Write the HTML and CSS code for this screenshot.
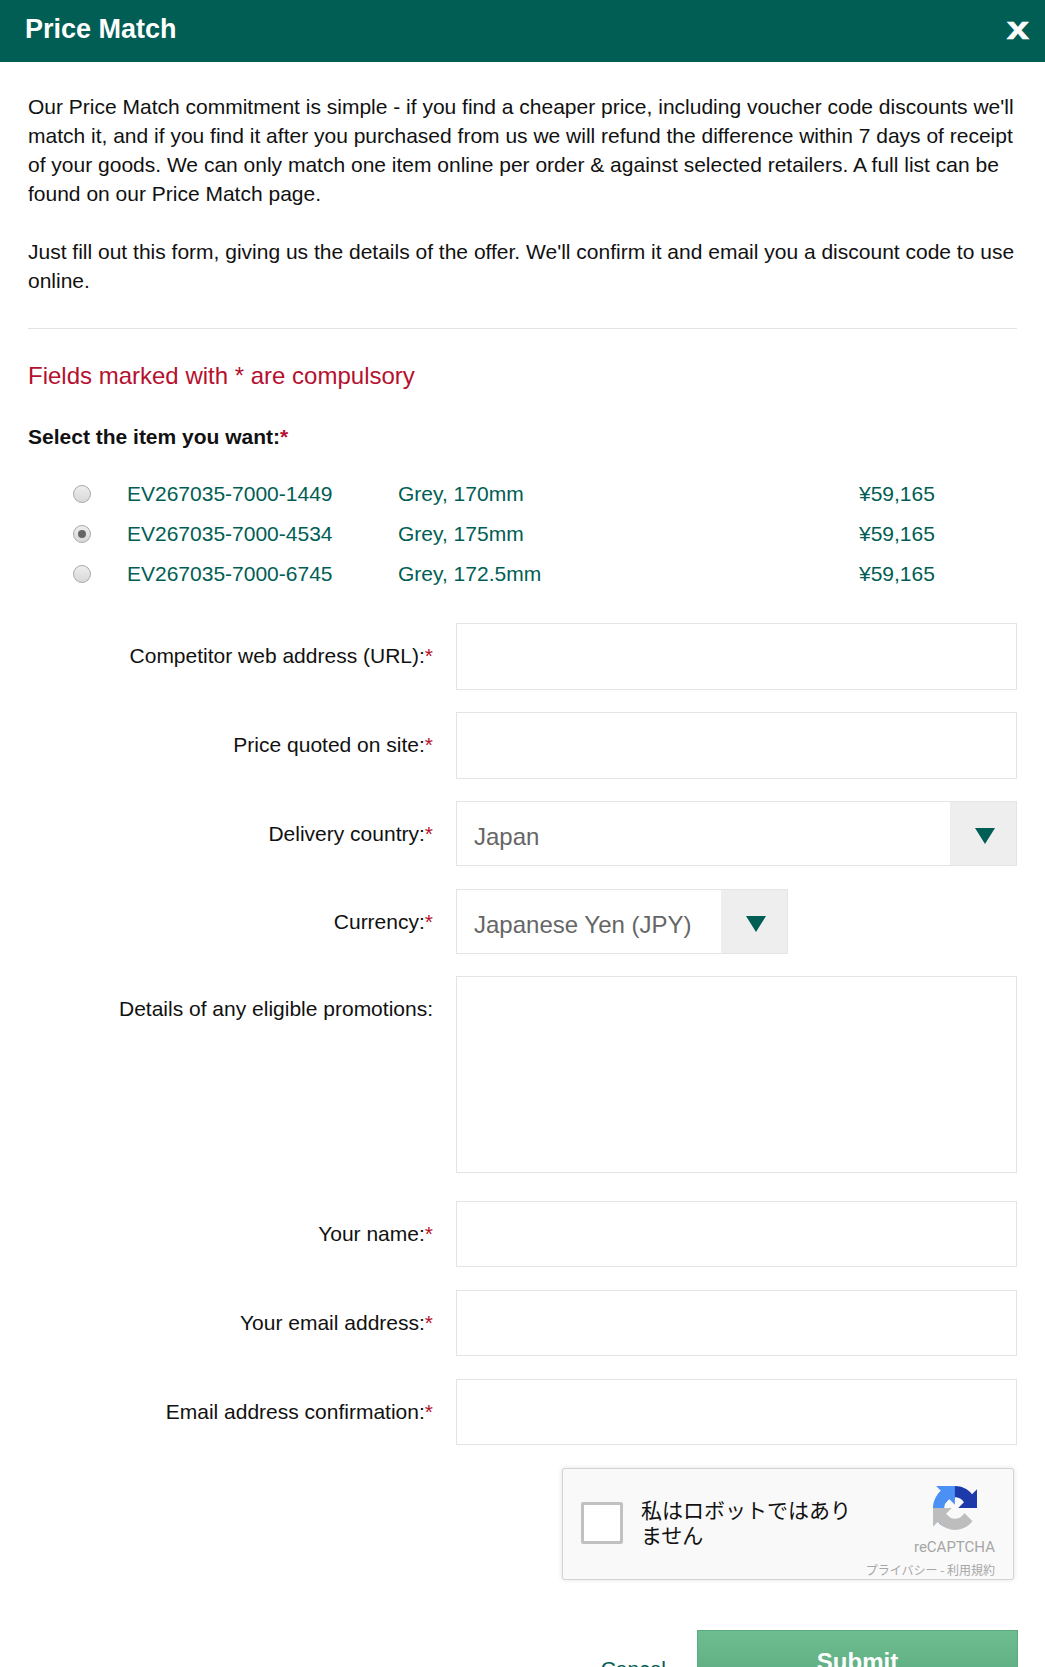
FILE: index.html
```html
<!DOCTYPE html>
<html lang="en">
<head>
<meta charset="utf-8">
<title>Price Match</title>
<link rel="stylesheet" href="styles.css">
</head>
<body>
<div class="page">
  <header class="modal-header">
    <h1 class="modal-title">Price Match</h1>
    <span class="modal-close">x</span>
  </header>
  <main class="modal-body">
    <p class="intro">Our Price Match commitment is simple - if you find a cheaper price, including voucher code discounts we'll match it, and if you find it after you purchased from us we will refund the difference within 7 days of receipt of your goods. We can only match one item online per order &amp; against selected retailers. A full list can be found on our Price Match page.</p>
    <p class="intro">Just fill out this form, giving us the details of the offer. We'll confirm it and email you a discount code to use online.</p>
    <hr class="divider">
    <p class="compulsory">Fields marked with * are compulsory</p>
    <p class="select-title">Select the item you want:<span class="req">*</span></p>
    <div class="items">
      <div class="item"><span class="radio"></span><span class="sku">EV267035-7000-1449</span><span class="variant">Grey, 170mm</span><span class="price">¥59,165</span></div>
      <div class="item"><span class="radio radio-on"></span><span class="sku">EV267035-7000-4534</span><span class="variant">Grey, 175mm</span><span class="price">¥59,165</span></div>
      <div class="item"><span class="radio"></span><span class="sku">EV267035-7000-6745</span><span class="variant">Grey, 172.5mm</span><span class="price">¥59,165</span></div>
    </div>
    <div class="form">
      <div class="row row-input"><label class="label">Competitor web address (URL):<span class="req">*</span></label><div class="box"></div></div>
      <div class="row row-input"><label class="label">Price quoted on site:<span class="req">*</span></label><div class="box"></div></div>
      <div class="row row-select"><label class="label">Delivery country:<span class="req">*</span></label><div class="select"><span class="select-value">Japan</span><span class="select-btn"><svg class="caret" viewBox="0 0 20 16"><path d="M0 0H20L10 16Z"/></svg></span></div></div>
      <div class="row row-input"><label class="label">Currency:<span class="req">*</span></label><div class="select select-small"><span class="select-value">Japanese Yen (JPY)</span><span class="select-btn"><svg class="caret" viewBox="0 0 20 16"><path d="M0 0H20L10 16Z"/></svg></span></div></div>
      <div class="row row-area"><label class="label">Details of any eligible promotions:</label><div class="box box-area"></div></div>
      <div class="row row-short"><label class="label">Your name:<span class="req">*</span></label><div class="box box-short"></div></div>
      <div class="row row-short"><label class="label">Your email address:<span class="req">*</span></label><div class="box box-short"></div></div>
      <div class="row row-short"><label class="label">Email address confirmation:<span class="req">*</span></label><div class="box box-short"></div></div>
    </div>
    <div class="captcha-wrap">
      <div class="captcha">
        <span class="captcha-check"></span>
        <span class="captcha-text">私はロボットではありません</span>
        <div class="captcha-brand">
          <svg class="captcha-logo" viewBox="0 0 64 64">
            <path fill="#1c3aa9" d="M64 31.955l-.033-1.37V4.687l-7.16 7.16C50.948 4.674 42.033.093 32.05.093c-10.4 0-19.622 4.96-25.458 12.64l11.736 11.86a15.55 15.55 0 0 1 4.754-5.334c2.05-1.6 4.952-2.906 8.968-2.906.485 0 .86.057 1.135.163 4.976.393 9.288 3.14 11.827 7.124l-8.307 8.307 26.295.008"/>
            <path fill="#4a90f5" d="M31.862.094l-1.37.033H4.594l7.16 7.16C4.58 13.147 0 22.06 0 32.046c0 10.4 4.96 19.622 12.64 25.458l11.86-11.736a15.55 15.55 0 0 1-5.334-4.754c-1.6-2.05-2.906-4.952-2.906-8.968 0-.485.057-.86.163-1.135.393-4.976 3.14-9.288 7.124-11.827l8.307 8.307L31.862.094"/>
            <path fill="#bdbdbd" d="M.001 32.045l.033 1.37v25.898l7.16-7.16c5.86 7.173 14.774 11.754 24.76 11.754 10.4 0 19.622-4.96 25.458-12.64l-11.736-11.86a15.55 15.55 0 0 1-4.754 5.334c-2.05 1.6-4.952 2.906-8.968 2.906-.485 0-.86-.057-1.135-.163-4.976-.393-9.288-3.14-11.827-7.124l8.307-8.307L0 32.037"/>
          </svg>
          <span class="captcha-name">reCAPTCHA</span>
          <span class="captcha-links">プライバシー - 利用規約</span>
        </div>
      </div>
    </div>
    <div class="actions">
      <a class="cancel">Cancel</a>
      <button class="submit">Submit</button>
    </div>
  </main>
</div>
</body>
</html>
```

FILE: styles.css
```css
* { box-sizing: border-box; }
html, body { margin: 0; padding: 0; height: 1667px; overflow: hidden; background: #fff; }
body { font-family: "Liberation Sans", Arial, sans-serif; color: #111; font-size: 21px; }
.page { width: 1045px; height: 1667px; overflow: hidden; }
.modal-header { height: 62px; background: #005e54; color: #fff; display: flex; align-items: center; justify-content: space-between; padding: 0 0 4px 25px; }
.modal-title { margin: 0; font-size: 27px; font-weight: 700; }
.modal-close { display: inline-block; font-size: 32px; font-weight: 700; line-height: 1; margin: 0 18px 3px 0; transform: scaleX(1.25); -webkit-text-stroke: 0.6px #fff; }
.modal-body { padding: 30px 28px 0; }
.intro { margin: 0 0 29px; line-height: 29px; }
.intro + .intro { margin-bottom: 33px; }
.divider { margin: 0; border: 0; border-top: 1px solid #e3e3e3; }
.compulsory { margin: 33px 0 0; color: #b5102f; font-size: 24px; line-height: 28px; }
.select-title { margin: 33px 0 0; font-weight: 700; line-height: 28px; }
.items { margin-top: 23px; }
.item { display: flex; align-items: center; height: 40px; color: #005e54; padding-left: 45px; }
.radio { width: 18px; height: 18px; border-radius: 50%; border: 1px solid #a9a9a9; background: linear-gradient(#eee, #d8d8d8); flex: none; margin-right: 36px; display: flex; align-items: center; justify-content: center; }
.radio-on::after { content: ""; width: 8px; height: 8px; border-radius: 50%; background: #666; }
.sku { width: 271px; }
.variant { width: 461px; }
.form { margin-top: 29px; }
.row { display: flex; }
.label { width: 405px; text-align: right; flex: none; padding-top: 21px; line-height: 24px; }
.req { color: #b5102f; }
.row-input { margin-bottom: 22px; }
.row-select, .row-short { margin-bottom: 23px; }
.row-area { margin-bottom: 28px; }
.box { width: 561px; height: 67px; margin-left: 23px; border: 1px solid #e4e4e4; }
.box-short { height: 66px; }
.box-area { height: 197px; }
.select { display: flex; width: 561px; height: 65px; margin-left: 23px; border: 1px solid #e4e4e4; color: #666; font-size: 24px; }
.select-small { width: 332px; }
.select-value { flex: 1; padding: 21px 0 0 17px; line-height: 28px; }
.select-btn { width: 66px; background: #eee; display: flex; justify-content: center; padding: 26px 0 0 4px; }
.caret { width: 20px; height: 16px; fill: #005e54; }
.captcha-wrap { display: flex; justify-content: flex-end; margin-right: 3px; }
.captcha { width: 452px; height: 112px; background: #f9f9f9; border: 1px solid #d3d3d3; border-radius: 3px; box-shadow: 0 0 4px 1px rgba(0,0,0,.08); display: flex; position: relative; }
.captcha-check { width: 42px; height: 42px; border: 3px solid #c1c1c1; border-radius: 2px; background: #fff; margin: 33px 18px 0 18px; flex: none; }
.captcha-text { width: 214px; font-family: "Noto Sans CJK JP", sans-serif; font-size: 21px; line-height: 25px; margin-top: 28px; color: #111; }
.captcha-brand { position: absolute; right: 18px; top: 17px; display: flex; flex-direction: column; align-items: flex-end; color: #a6a6a6; }
.captcha-logo { width: 44px; height: 44px; margin-right: 18px; }
.captcha-name { font-family: Roboto, sans-serif; font-size: 15px; margin-top: 7px; line-height: 20px; }
.captcha-links { font-family: "Noto Sans CJK JP", sans-serif; font-size: 12px; margin-top: 5px; line-height: 16px; }
.actions { display: flex; justify-content: flex-end; align-items: flex-start; margin: 50px -1px 0 0; gap: 31px; }
.cancel { color: #005e54; padding-top: 27px; line-height: 24px; }
.submit { width: 321px; height: 64px; border: 1px solid #5aa97f; background: linear-gradient(#6dbd90, #5aa97f); color: #fff; font: 700 24px "Liberation Sans", Arial, sans-serif; }
```
